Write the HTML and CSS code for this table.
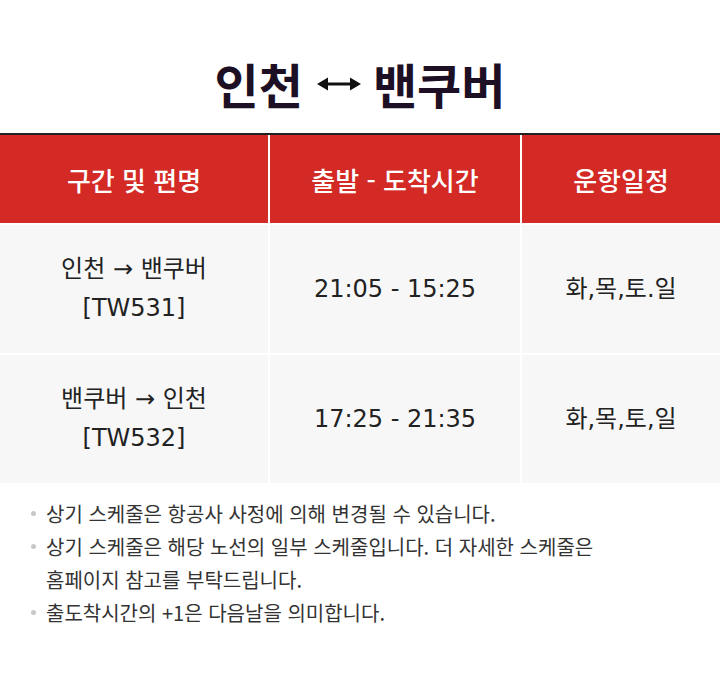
FILE: index.html
```html
<!DOCTYPE html>
<html lang="ko">
<head>
<meta charset="utf-8">
<link rel="stylesheet" href="styles.css">
</head>
<body>
<div class="page">
  <h1 class="title">인천<svg class="arrow" width="44" height="14" viewBox="0 0 44 14" aria-hidden="true"><path d="M0 7 L11 0.5 L11 5.5 L33 5.5 L33 0.5 L44 7 L33 13.5 L33 8.5 L11 8.5 L11 13.5 Z" fill="#111111"/></svg>밴쿠버</h1>
  <div class="table">
    <div class="cell head">구간 및 편명</div>
    <div class="cell head">출발 - 도착시간</div>
    <div class="cell head">운항일정</div>

    <div class="cell">인천 → 밴쿠버<br>[TW531]</div>
    <div class="cell">21:05 - 15:25</div>
    <div class="cell">화,목,토.일</div>

    <div class="cell">밴쿠버 → 인천<br>[TW532]</div>
    <div class="cell">17:25 - 21:35</div>
    <div class="cell">화,목,토,일</div>
  </div>
  <ul class="notes">
    <li>상기 스케줄은 항공사 사정에 의해 변경될 수 있습니다.</li>
    <li>상기 스케줄은 해당 노선의 일부 스케줄입니다. 더 자세한 스케줄은<br>홈페이지 참고를 부탁드립니다.</li>
    <li>출도착시간의 +1은 다음날을 의미합니다.</li>
  </ul>
</div>
</body>
</html>
```
FILE: styles.css
```css
html, body {
  margin: 0;
  padding: 0;
  background: #ffffff;
}
.page {
  width: 720px;
  font-family: "Noto Sans CJK KR", "Noto Sans", sans-serif;
}
.title {
  margin: 0;
  padding-top: 55px;
  height: 78px;
  display: flex;
  justify-content: center;
  align-items: center;
  align-content: flex-start;
  font-size: 48px;
  font-weight: 700;
  line-height: 56px;
  color: #1e1024;
}
.title {
  align-items: flex-start;
}
.arrow {
  margin: 22px 12px 0 14px;
}
.table {
  display: grid;
  grid-template-columns: 268px 250px 198px;
  grid-template-rows: 88px 128px 128px;
  gap: 2px;
  background: #ffffff;
  border-top: 2px solid #222222;
}
.cell {
  display: flex;
  align-items: center;
  justify-content: center;
  text-align: center;
  background: #f7f7f7;
  color: #222222;
  font-family: "DejaVu Sans", "Noto Sans CJK KR", sans-serif;
  font-size: 24px;
  line-height: 39px;
}
.cell.head {
  background: #d32a26;
  color: #ffffff;
  font-family: "Noto Sans CJK KR", sans-serif;
  font-weight: 500;
  font-size: 26px;
}
.notes {
  list-style: none;
  margin: 0;
  padding: 14px 0 0 46px;
  color: #333333;
  font-size: 20px;
  line-height: 33px;
}
.notes li {
  position: relative;
}
.notes li::before {
  content: "";
  position: absolute;
  left: -15px;
  top: 14px;
  width: 5px;
  height: 5px;
  border-radius: 50%;
  background: #c8c8c8;
}
```
